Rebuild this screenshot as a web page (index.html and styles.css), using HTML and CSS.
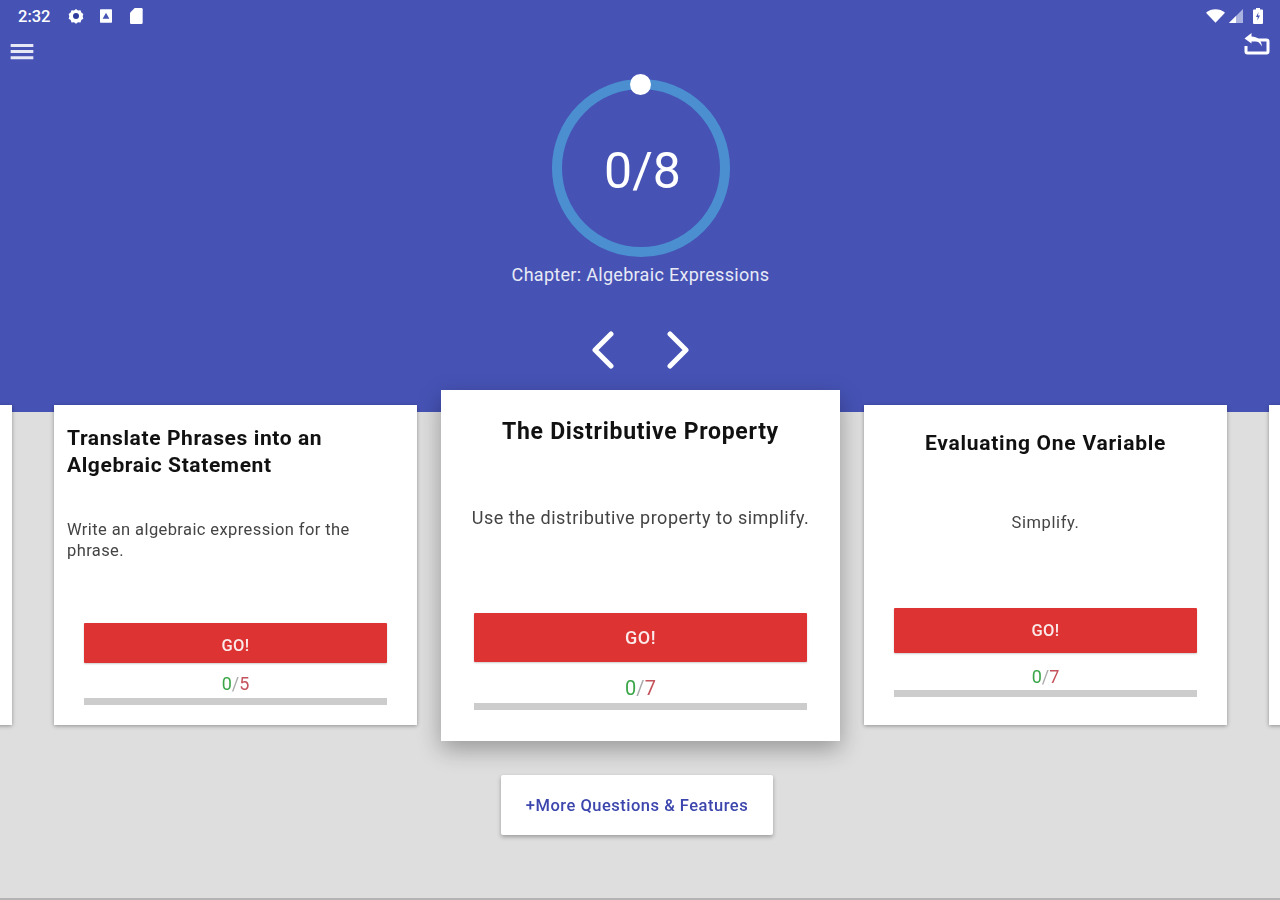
FILE: index.html
```html
<!DOCTYPE html>
<html lang="en">
<head>
    <meta charset="UTF-8">
    <title>Chapter: Algebraic Expressions</title>
    <link rel="stylesheet" href="styles.css">
</head>
<body>
    <div class="screen">
        <header class="top">
            <div class="status-bar">
                <div class="status-left">
                    <span class="time">2:32</span>
                    <svg class="status-icon" viewBox="0 0 24 24"><path d="M12 1.500l3 2.200 3.700-.3 1.300 3.500 3 2.100-1 3.500 1 3.500-3 2.100-1.300 3.500-3.700-.3-3 2.200-3-2.200-3.700.3-1.300-3.500-3-2.100 1-3.500-1-3.500 3-2.100 1.300-3.500 3.700.3z" fill="#fff"/><circle cx="12" cy="12" r="4.500" fill="#2f3c9e"/></svg>
                    <svg class="status-icon" viewBox="0 0 24 24"><rect x="3" y="2" width="18" height="20" rx="1" fill="#fff"/><path d="M7 16l5-9 5 9z" fill="#4653b5"/></svg>
                    <svg class="status-icon" viewBox="0 0 24 24"><path d="M10 0h10a2 2 0 0 1 2 2v20a2 2 0 0 1-2 2H5a2 2 0 0 1-2-2V7z" fill="#fff"/></svg>
                </div>
                <div class="status-right">
                    <svg class="wifi" viewBox="0 0 20 14"><path d="M0 3.500C5.500-1.200 14.500-1.200 20 3.500L10 14z" fill="#fff"/></svg>
                    <svg class="signal" viewBox="0 0 14 14"><path d="M14 0v14H0z" fill="#aab2e0"/><path d="M7 7v7H0z" fill="#fff"/></svg>
                    <svg class="battery" viewBox="0 0 10 16"><path d="M3 0h4v1.500h2a1 1 0 0 1 1 1V15a1 1 0 0 1-1 1H1a1 1 0 0 1-1-1V2.500a1 1 0 0 1 1-1h2z" fill="#fff"/><path d="M5.500 4L3 9h1.800l-.5 3.500L7 7.500H5z" fill="#4653b5"/></svg>
                </div>
            </div>
            <div class="tool-row">
                <svg class="menu-icon" viewBox="0 0 24 18"><path d="M0 1h24v3.200H0zM0 7.500h24v3.200H0zM0 14h24v3.200H0z" fill="#e6e8f5"/></svg>
                <svg class="back-icon" viewBox="0 0 26 22"><path d="M7 7h16a1.500 1.500 0 0 1 1.500 1.500v10A1.500 1.500 0 0 1 23 20H4a1.500 1.500 0 0 1-1.500-1.500V13" fill="none" stroke="#fff" stroke-width="3"/><path d="M8 0L1 5.500 8 10.500V7.500c5 0 8 1.500 10.500 6C18 7 14 3.500 8 3.500z" fill="#fff"/></svg>
            </div>
            <div class="progress-ring">
                <span class="ring-dot"></span>
                <span class="ring-count">0/8</span>
            </div>
            <p class="chapter">Chapter: Algebraic Expressions</p>
            <div class="arrows">
                <svg class="arrow" viewBox="0 0 26 38"><path d="M21 3L5 19l16 16" fill="none" stroke="#fff" stroke-width="5" stroke-linecap="round" stroke-linejoin="round"/></svg>
                <svg class="arrow" viewBox="0 0 26 38"><path d="M5 3l16 16L5 35" fill="none" stroke="#fff" stroke-width="5" stroke-linecap="round" stroke-linejoin="round"/></svg>
            </div>
        </header>

        <div class="carousel">
            <div class="card card-peek card-peek-left"></div>

            <div class="card card-left">
                <h2>Translate Phrases into an Algebraic Statement</h2>
                <p>Write an algebraic expression for the phrase.</p>
                <div class="card-foot">
                    <button class="go">GO!</button>
                    <div class="score"><span class="right">0</span><span class="sep">/</span><span class="wrong">5</span></div>
                    <div class="bar"></div>
                </div>
            </div>

            <div class="card card-main">
                <h2>The Distributive Property</h2>
                <p>Use the distributive property to simplify.</p>
                <div class="card-foot">
                    <button class="go">GO!</button>
                    <div class="score"><span class="right">0</span><span class="sep">/</span><span class="wrong">7</span></div>
                    <div class="bar"></div>
                </div>
            </div>

            <div class="card card-right">
                <h2>Evaluating One Variable</h2>
                <p>Simplify.</p>
                <div class="card-foot">
                    <button class="go">GO!</button>
                    <div class="score"><span class="right">0</span><span class="sep">/</span><span class="wrong">7</span></div>
                    <div class="bar"></div>
                </div>
            </div>

            <div class="card card-peek card-peek-right"></div>
        </div>

        <div class="more-row">
            <button class="more">+More Questions &amp; Features</button>
        </div>
    </div>
</body>
</html>
```

FILE: styles.css
```css
:root {
    --blue: #4653b5;
    --page: #dedede;
    --red: #dd3333;
}

body {
    margin: 0;
    background: var(--page);
    font-family: Roboto, 'Liberation Sans', sans-serif;
    overflow: hidden;
}

.screen {
    height: 900px;
    overflow: hidden;
    border-bottom: 2px solid #b3b3b3;
    box-sizing: border-box;
    filter: blur(0.6px);
}

/* header */
.top {
    height: 412px;
    background: var(--blue);
    color: #fff;
    display: flex;
    flex-direction: column;
    align-items: center;
}

.status-bar {
    width: 100%;
    height: 32px;
    box-sizing: border-box;
    padding: 0 17px 0 18px;
    display: flex;
    justify-content: space-between;
    align-items: center;
}

.status-left,
.status-right {
    display: flex;
    align-items: center;
}

.time {
    font-size: 16.500px;
    font-weight: 500;
    width: 50px;
}

.status-icon {
    width: 16px;
    height: 16px;
    margin-right: 14px;
}

.wifi {
    width: 19px;
    height: 14px;
    margin-right: 4px;
}

.signal {
    width: 14px;
    height: 14px;
    margin-right: 10px;
}

.battery {
    width: 10px;
    height: 16px;
}

.tool-row {
    width: 100%;
    height: 28px;
    box-sizing: border-box;
    padding: 0 10px;
    display: flex;
    justify-content: space-between;
    align-items: flex-end;
}

.menu-icon {
    width: 24px;
    height: 17px;
}

.back-icon {
    width: 27px;
    height: 22px;
    align-self: flex-start;
    margin-top: 1px;
}

.progress-ring {
    position: relative;
    width: 178px;
    height: 178px;
    box-sizing: border-box;
    margin: 19px 0 0 1px;
    padding-top: 6px;
    border: 10px solid #4b8fd0;
    border-radius: 50%;
    display: flex;
    align-items: center;
    justify-content: center;
}

.ring-dot {
    position: absolute;
    top: -15px;
    left: 68px;
    width: 21px;
    height: 21px;
    background: #fff;
    border-radius: 50%;
}

.ring-count {
    font-size: 50px;
    margin-left: 4px;
}

.chapter {
    margin: 6px 0 0 1px;
    font-size: 18px;
    line-height: 24px;
    letter-spacing: 0.3px;
    color: #e8eaf6;
}

.arrows {
    margin: 44px 0 0 1px;
    display: flex;
    gap: 49px;
}

.arrow {
    width: 26px;
    height: 38px;
}

/* cards */
.carousel {
    margin-top: -22px;
    padding-left: 1px;
    height: 351px;
    display: flex;
    justify-content: center;
    align-items: center;
    gap: 24px;
}

.card {
    flex-shrink: 0;
    box-sizing: border-box;
    background: #fff;
    box-shadow: 0 1px 4px rgba(0, 0, 0, 0.35);
    display: flex;
    flex-direction: column;
}

.card-peek,
.card-left,
.card-right {
    width: 363px;
    height: 320px;
    margin-bottom: 1px;
}

.card-peek-left {
    margin-right: 18px;
}

.card-peek-right {
    margin-left: 18px;
}

.card h2 {
    margin: 0;
    font-size: 21px;
    line-height: 27px;
    font-weight: 700;
    letter-spacing: 0.6px;
    color: #111;
}

.card p {
    margin: 0;
    font-size: 16.500px;
    line-height: 21px;
    letter-spacing: 0.4px;
    color: #444;
}

/* left card */
.card-left {
    padding: 20px 13px 0;
}

.card-left h2 {
    max-width: 300px;
}

.card-left p {
    margin-top: 40px;
    max-width: 300px;
}

.card-left .card-foot {
    margin-top: 62px;
    padding: 0 17px;
}

.card-left .go {
    padding-top: 6px;
}

/* centre card */
.card-main {
    width: 399px;
    height: 351px;
    padding: 26px 33px 0;
    box-shadow: 0 8px 22px rgba(0, 0, 0, 0.32);
    text-align: center;
}

.card-main h2 {
    font-size: 23px;
    line-height: 32px;
    letter-spacing: 0.7px;
}

.card-main p {
    margin: 58px -8px 0;
    font-size: 18px;
    line-height: 24px;
    letter-spacing: 0.5px;
    white-space: nowrap;
}

.card-main .card-foot {
    margin-top: 83px;
}

.card-main .go {
    height: 49px;
    font-size: 18px;
    letter-spacing: 0.5px;
}

.card-main .score {
    font-size: 20px;
    line-height: 26px;
    margin-top: 13px;
}

.card-main .bar {
    margin-top: 2px;
}

/* right card */
.card-right {
    padding: 25px 30px 0;
    text-align: center;
}

.card-right h2 {
    letter-spacing: 0.75px;
}

.card-right p {
    margin-top: 55px;
    letter-spacing: 0.6px;
}

.card-right .card-foot {
    margin-top: 75px;
}

.card-right .go {
    height: 45px;
}

.card-right .score {
    margin-top: 13px;
}

.card-right .bar {
    margin-top: 2px;
}

.card-foot {
    display: flex;
    flex-direction: column;
    align-items: stretch;
}

.go {
    height: 40px;
    border: none;
    border-radius: 1px;
    background: var(--red);
    color: #fbeaea;
    font-family: inherit;
    font-size: 16.500px;
    font-weight: 500;
    letter-spacing: 0.3px;
    box-shadow: 0 1px 2px rgba(0, 0, 0, 0.2);
}

.score {
    margin-top: 10px;
    text-align: center;
    font-size: 18px;
    line-height: 22px;
}

.score .right {
    color: #3aa648;
}

.score .sep {
    color: #aaa;
}

.score .wrong {
    color: #c4545c;
}

.bar {
    height: 7px;
    margin-top: 3px;
    background: #cccccc;
}

/* more button */
.more-row {
    margin-top: 34px;
    padding-right: 6px;
    display: flex;
    justify-content: center;
}

.more {
    width: 272px;
    height: 60px;
    border: none;
    border-radius: 2px;
    background: #fff;
    color: #3c46ad;
    font-family: inherit;
    font-size: 16.500px;
    font-weight: 500;
    letter-spacing: 0.5px;
    box-shadow: 0 2px 4px rgba(0, 0, 0, 0.3);
}
```
